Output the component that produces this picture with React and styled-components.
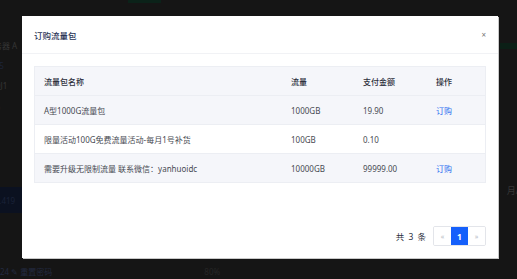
import React from "react";
import styled, { createGlobalStyle } from "styled-components";

const Global = createGlobalStyle`
  html, body { margin: 0; padding: 0; background: #151515; }
  body { font-family: "Noto Sans", "Noto Sans CJK SC", sans-serif; overflow: hidden; }
  * { box-sizing: border-box; }
`;

const Page = styled.div`
  position: relative;
  width: 517px;
  height: 279px;
  overflow: hidden;
  background: #151515;
`;

const TopBar = styled.div`
  height: 3px;
  width: 33px;
  margin-left: 128px;
  background: #0b2219;
`;

const BgColumn = styled.div`
  display: flex;
  flex-direction: column;
  margin-left: -14px;
  margin-top: 32px;
  font-size: 8px;
  color: #363636;
`;

const BgLine = styled.div`
  height: ${(p) => p.$h || 20}px;
  display: flex;
  align-items: center;
  color: ${(p) => p.$c || "#363636"};
  background: ${(p) => p.$bg || "transparent"};
  width: ${(p) => (p.$bg ? "40px" : "auto")};
  margin-top: ${(p) => p.$mt || 0}px;
  white-space: nowrap;
`;

const BottomLine = styled.div`
  position: absolute;
  left: 0;
  bottom: 2px;
  display: flex;
  font-size: 8px;
  color: #232a40;
`;

const Percent = styled.span`
  margin-left: 152px;
  color: #262626;
`;

const RightMark = styled.div`
  position: absolute;
  right: 0;
  top: 43px;
  width: 17px;
  height: 6px;
  background: #0b1f16;
`;

const RightText = styled.div`
  position: absolute;
  right: -2px;
  top: 184px;
  font-size: 9px;
  color: #363636;
`;

const Modal = styled.div`
  position: absolute;
  left: 22px;
  top: 16px;
  width: 476px;
  height: 242px;
  background: #fff;
  box-shadow: 1px 1px 0 #c9c9c9;
  display: flex;
  flex-direction: column;
`;

const Header = styled.div`
  height: 38px;
  display: flex;
  align-items: center;
  justify-content: space-between;
  padding: 0 12px;
  border-bottom: 1px solid #f1f2f5;
`;

const Title = styled.div`
  font-size: 8.5px;
  color: #2a3456;
  font-weight: 500;
`;

const Close = styled.div`
  font-size: 8px;
  color: #777;
  line-height: 1;
`;

const Body = styled.div`
  flex: 1;
  display: flex;
  flex-direction: column;
  padding: 12px;
`;

const Table = styled.div`
  display: flex;
  flex-direction: column;
  border: 1px solid #eceef3;
`;

const Row = styled.div`
  display: grid;
  grid-template-columns: 247px 72px 73px 1fr;
  height: ${(p) => p.$h || 29}px;
  align-items: center;
  background: ${(p) => (p.$shade ? "#f5f6fa" : "#fff")};
  border-top: ${(p) => (p.$first ? "none" : "1px solid #eceef3")};
`;

const Cell = styled.div`
  padding-left: 9px;
  font-size: 8px;
  color: ${(p) => (p.$head ? "#2c2f3a" : "#474a52")};
  font-weight: ${(p) => (p.$head ? 500 : 400)};
  white-space: nowrap;
`;

const Link = styled.span`
  color: #2f6ef0;
  cursor: pointer;
`;

const Footer = styled.div`
  margin-top: auto;
  display: flex;
  justify-content: flex-end;
  align-items: center;
  gap: 6px;
`;

const Total = styled.div`
  font-size: 8.5px;
  color: #2a3040;
  letter-spacing: 1px;
`;

const Pager = styled.div`
  display: flex;
  height: 20px;
  border: 1px solid #e3e5ea;
  border-radius: 2px;
  overflow: hidden;
`;

const PageBtn = styled.div`
  width: 17px;
  display: flex;
  align-items: center;
  justify-content: center;
  font-size: ${(p) => (p.$active ? "8.5px" : "7px")};
  font-weight: ${(p) => (p.$active ? 700 : 400)};
  color: ${(p) => (p.$active ? "#fff" : "#b8bcc6")};
  background: ${(p) => (p.$active ? "#1560fb" : "#fff")};
`;

const rows = [
  { name: "A型1000G流量包", flow: "1000GB", price: "19.90", op: true },
  { name: "限量活动100G免费流量活动-每月1号补货", flow: "100GB", price: "0.10", op: false },
  { name: "需要升级无限制流量 联系微信：yanhuoidc", flow: "10000GB", price: "99999.00", op: true },
];

export default function App() {
  return (
    <Page>
      <Global />
      <TopBar />
      <BgColumn>
        <BgLine $h={20}>服务器 A</BgLine>
        <BgLine $h={20} $c="#1d2438">&nbsp;&nbsp;325</BgLine>
        <BgLine $h={20}>ovDJ1</BgLine>
        <BgLine $h={24}>&nbsp;&nbsp;&nbsp;○</BgLine>
        <BgLine $h={26} $mt={68} $bg="#0b1120" $c="#1a2238">&nbsp;&nbsp;13.419</BgLine>
      </BgColumn>
      <BottomLine>
        <span>24 ✎ 重置密码</span>
        <Percent>80%</Percent>
      </BottomLine>
      <RightMark />
      <RightText>月/</RightText>
      <Modal>
        <Header>
          <Title>订购流量包</Title>
          <Close>×</Close>
        </Header>
        <Body>
          <Table>
            <Row $shade $first $h={28}>
              <Cell $head>流量包名称</Cell>
              <Cell $head>流量</Cell>
              <Cell $head>支付金额</Cell>
              <Cell $head>操作</Cell>
            </Row>
            {rows.map((r, i) => (
              <Row key={i} $shade={i % 2 === 0}>
                <Cell>{r.name}</Cell>
                <Cell>{r.flow}</Cell>
                <Cell>{r.price}</Cell>
                <Cell>{r.op ? <Link>订购</Link> : null}</Cell>
              </Row>
            ))}
          </Table>
          <Footer>
            <Total>共 3 条</Total>
            <Pager>
              <PageBtn>«</PageBtn>
              <PageBtn $active>1</PageBtn>
              <PageBtn>»</PageBtn>
            </Pager>
          </Footer>
        </Body>
      </Modal>
    </Page>
  );
}
